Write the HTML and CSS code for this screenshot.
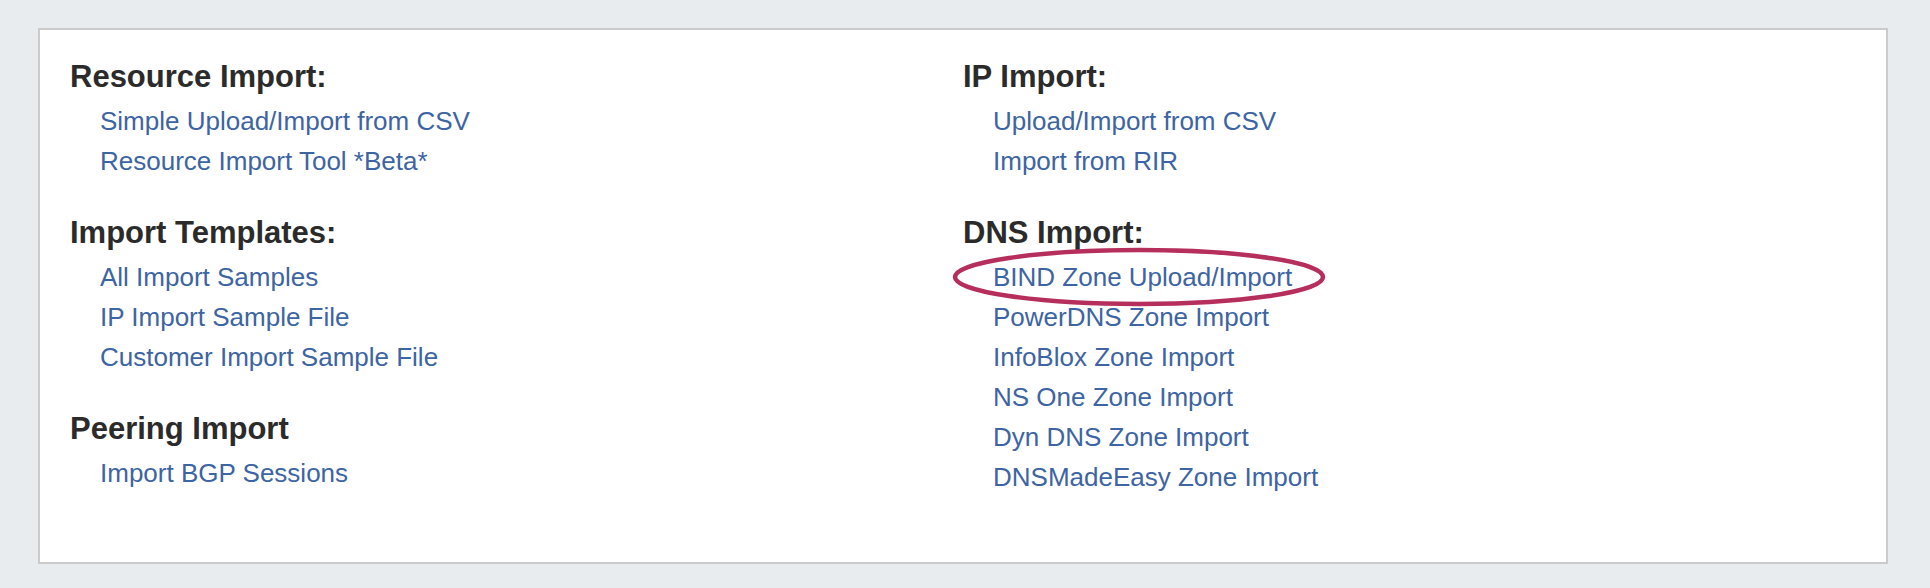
FILE: index.html
```html
<!DOCTYPE html>
<html lang="en">
<head>
<meta charset="utf-8">
<title>Import</title>
<link rel="stylesheet" href="styles.css">
</head>
<body>
<div class="card">
  <div class="grid">
    <div class="col">
      <section class="group">
        <h3 class="title">Resource Import:</h3>
        <ul class="links">
          <li><a href="#">Simple Upload/Import from CSV</a></li>
          <li><a href="#">Resource Import Tool *Beta*</a></li>
        </ul>
      </section>
      <section class="group">
        <h3 class="title">Import Templates:</h3>
        <ul class="links">
          <li><a href="#">All Import Samples</a></li>
          <li><a href="#">IP Import Sample File</a></li>
          <li><a href="#">Customer Import Sample File</a></li>
        </ul>
      </section>
      <section class="group">
        <h3 class="title">Peering Import</h3>
        <ul class="links">
          <li><a href="#">Import BGP Sessions</a></li>
        </ul>
      </section>
    </div>
    <div class="col">
      <section class="group">
        <h3 class="title">IP Import:</h3>
        <ul class="links">
          <li><a href="#">Upload/Import from CSV</a></li>
          <li><a href="#">Import from RIR</a></li>
        </ul>
      </section>
      <section class="group">
        <h3 class="title">DNS Import:</h3>
        <ul class="links">
          <li class="marked"><a href="#">BIND Zone Upload/Import</a>
            <svg class="circle" width="374" height="60" viewBox="0 0 374 60" aria-hidden="true">
              <ellipse cx="187" cy="30" rx="184" ry="27" fill="none" stroke="#b62f5c" stroke-width="4.5"/>
            </svg>
          </li>
          <li><a href="#">PowerDNS Zone Import</a></li>
          <li><a href="#">InfoBlox Zone Import</a></li>
          <li><a href="#">NS One Zone Import</a></li>
          <li><a href="#">Dyn DNS Zone Import</a></li>
          <li><a href="#">DNSMadeEasy Zone Import</a></li>
        </ul>
      </section>
    </div>
  </div>
</div>
</body>
</html>
```

FILE: styles.css
```css
html, body {
  margin: 0;
  padding: 0;
}

body {
  background: #e8ecef;
  font-family: "Liberation Sans", Arial, Helvetica, sans-serif;
  padding: 28px 42px 24px 38px;
}

.card {
  background: #ffffff;
  border: 2px solid #cbcbcb;
  padding: 27px 30px 65px 30px;
}

.grid {
  display: grid;
  grid-template-columns: 1fr 1fr;
}

.group + .group {
  margin-top: 32px;
}

.title {
  margin: 0 0 4px 0;
  font-size: 31px;
  line-height: 40px;
  font-weight: bold;
  color: #2b2b2b;
}

.links {
  list-style: none;
  margin: 0;
  padding: 0 0 0 30px;
}

.links li {
  font-size: 26px;
  line-height: 40px;
}

.links a {
  color: #3d64a3;
  text-decoration: none;
}

.marked {
  position: relative;
}

.circle {
  position: absolute;
  left: -41px;
  top: -10px;
  pointer-events: none;
}
```
